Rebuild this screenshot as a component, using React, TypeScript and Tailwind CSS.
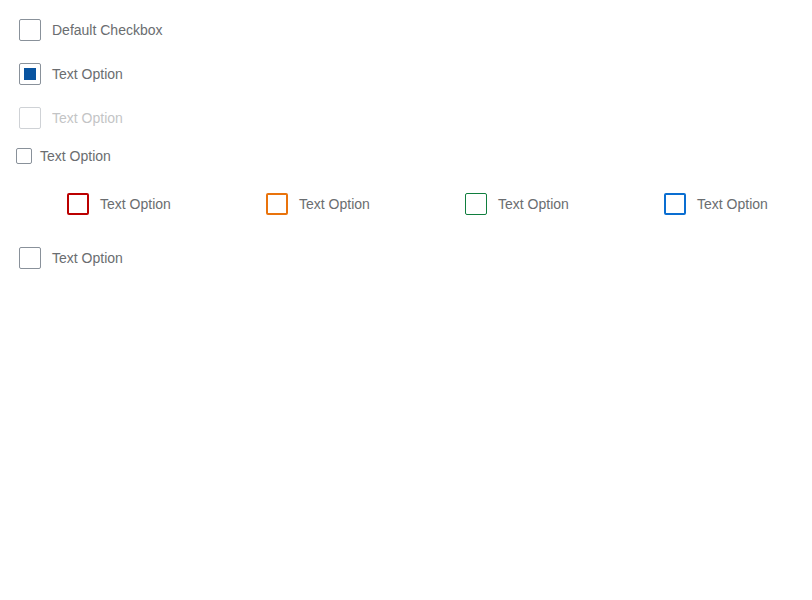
import React from "react";

type State = "none" | "error" | "warning" | "success" | "info";

function Box({ size = 22, checked = false, state = "none", disabled = false }: { size?: number; checked?: boolean; state?: State; disabled?: boolean }) {
  const cls =
    state === "error"
      ? "border-2 border-[#bb0000]"
      : state === "warning"
      ? "border-2 border-[#e9730c]"
      : state === "success"
      ? "border border-[#107e3e]"
      : state === "info"
      ? "border-2 border-[#0a6ed1]"
      : "border border-[#89919a]";
  return (
    <div
      className={`${cls} rounded-[2px] bg-white flex items-center justify-center shrink-0 ${disabled ? "opacity-40" : ""}`}
      style={{ width: size, height: size }}
    >
      {checked && <div className="w-[12px] h-[12px] bg-[#0854a0]" />}
    </div>
  );
}

function Check({ label, checked, state, disabled, compact }: { label: string; checked?: boolean; state?: State; disabled?: boolean; compact?: boolean }) {
  if (compact) {
    return (
      <div className="flex items-center h-[32px] pl-[8px]">
        <Box size={16} />
        <span className="ml-[8px] text-[14px] text-[#6a6d70]">{label}</span>
      </div>
    );
  }
  return (
    <div className="flex items-center h-[44px] pl-[11px]">
      <Box checked={checked} state={state} disabled={disabled} />
      <span className={`ml-[11px] text-[14px] whitespace-nowrap ${disabled ? "text-[#6a6d70] opacity-40" : "text-[#6a6d70]"}`}>{label}</span>
    </div>
  );
}

export default function App() {
  return (
    <div className="p-[8px] bg-white min-h-[600px]" style={{ fontFamily: '"Liberation Sans", Arial, sans-serif' }}>
      <Check label="Default Checkbox" />
      <Check label="Text Option" checked />
      <Check label="Text Option" disabled />
      <Check label="Text Option" compact />
      <div className="flex my-[10px] pl-[48px]">
        <div className="w-[199px] shrink-0"><Check label="Text Option" state="error" /></div>
        <div className="w-[199px] shrink-0"><Check label="Text Option" state="warning" /></div>
        <div className="w-[199px] shrink-0"><Check label="Text Option" state="success" /></div>
        <div className="min-w-0 flex-1"><Check label="Text Option" state="info" /></div>
      </div>
      <Check label="Text Option" />
    </div>
  );
}
